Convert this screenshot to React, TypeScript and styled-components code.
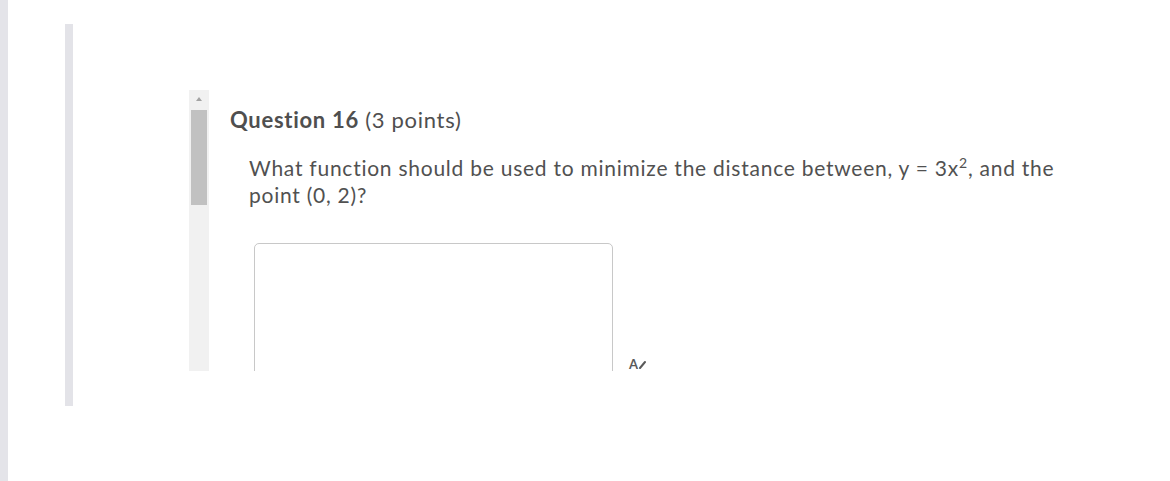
import React from 'react';
import styled, {createGlobalStyle} from "styled-components";

const GlobalStyle = createGlobalStyle`
  html, body {
    margin: 0;
    padding: 0;
    background: #ffffff;
  }
  body {
    font-family: Lato, "Liberation Sans", sans-serif;
  }
`

const Page = styled.div`
  display: flex;
  height: 481px;
  overflow: hidden;
`
const EdgeStrip = styled.div`
  width: 8px;
  flex-shrink: 0;
  background: #e4e4e9;
`
const Main = styled.div`
  display: flex;
  align-items: flex-start;
  padding: 24px 0 0 57px;
`
const Rail = styled.div`
  width: 8px;
  height: 382px;
  flex-shrink: 0;
  background: #e3e3e8;
`
const Frame = styled.div`
  display: flex;
  margin: 66px 0 0 116px;
  height: 281px;
`
const ScrollTrack = styled.div`
  width: 20px;
  display: flex;
  flex-direction: column;
  align-items: center;
  background: #f1f1f1;
`
const ScrollArrow = styled.div`
  height: 20px;
  width: 100%;
  display: flex;
  align-items: center;
  justify-content: center;

  &::before {
    content: "";
    border-left: 3.5px solid transparent;
    border-right: 3.5px solid transparent;
    border-bottom: 4px solid #a3a3a3;
    margin-top: -2px;
  }
`
const ScrollThumb = styled.div`
  width: 16px;
  height: 95px;
  background: #c1c1c1;
`
const Viewport = styled.div`
  width: 940px;
  overflow: hidden;
  padding-left: 21px;
  color: #555555;
`
const Heading = styled.h2`
  margin: 16px 0 0;
  font-size: 22px;
  line-height: 28px;
  letter-spacing: 0.7px;
  font-weight: 400;
  color: #4f4f4f;

  b {
    font-weight: 700;
  }
`
const Prompt = styled.p`
  margin: 20px 0 0 19px;
  width: 840px;
  font-size: 21px;
  line-height: 27px;
  letter-spacing: 0.75px;
  color: #515151;

  sup {
    font-size: 14px;
    line-height: 0;
    vertical-align: 8px;
  }
`
const AnswerRow = styled.div`
  display: flex;
  margin: 35px 0 0 24px;
`
const AnswerBox = styled.div`
  width: 357px;
  height: 150px;
  border: 1px solid #c8c8c8;
  border-radius: 5px;
  flex-shrink: 0;
`
const FormatIcon = styled.div`
  display: flex;
  align-items: center;
  gap: 1px;
  margin: 113px 0 0 16px;
  font-size: 13px;
  font-weight: 700;
  color: #5a5a5a;
  align-self: flex-start;
`

const App = () => {
    return (
        <>
            <GlobalStyle/>
            <Page>
                <EdgeStrip/>
                <Main>
                    <Rail/>
                    <Frame>
                        <ScrollTrack>
                            <ScrollArrow/>
                            <ScrollThumb/>
                        </ScrollTrack>
                        <Viewport>
                            <Heading><b>Question 16</b> (3 points)</Heading>
                            <Prompt>
                                What function should be used to minimize the distance between, y = 3x<sup>2</sup>, and the point (0, 2)?
                            </Prompt>
                            <AnswerRow>
                                <AnswerBox/>
                                <FormatIcon>
                                    <span>A</span>
                                    <svg width="7" height="9" viewBox="0 0 7 9">
                                        <path d="M1 8 L6 2" stroke="#5a5a5a" strokeWidth="2" strokeLinecap="round"/>
                                    </svg>
                                </FormatIcon>
                            </AnswerRow>
                        </Viewport>
                    </Frame>
                </Main>
            </Page>
        </>
    );
};

export default App;
